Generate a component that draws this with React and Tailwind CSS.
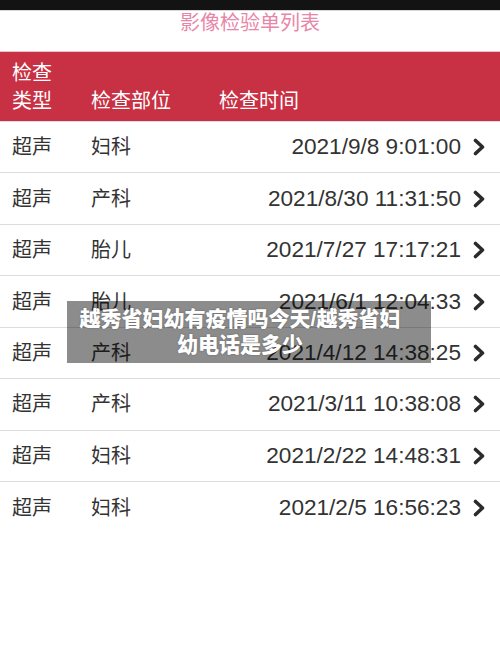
import React from 'react';

const rows = [
  { type: '超声', part: '妇科', time: '2021/9/8 9:01:00' },
  { type: '超声', part: '产科', time: '2021/8/30 11:31:50' },
  { type: '超声', part: '胎儿', time: '2021/7/27 17:17:21' },
  { type: '超声', part: '胎儿', time: '2021/6/1 12:04:33' },
  { type: '超声', part: '产科', time: '2021/4/12 14:38:25' },
  { type: '超声', part: '产科', time: '2021/3/11 10:38:08' },
  { type: '超声', part: '妇科', time: '2021/2/22 14:48:31' },
  { type: '超声', part: '妇科', time: '2021/2/5 16:56:23' },
];

const Chevron = () => (
  <svg width="14" height="18" viewBox="0 0 14 18" className="shrink-0">
    <polyline
      points="3.5,2.5 10.5,9 3.5,15.5"
      fill="none"
      stroke="#2b2b2b"
      strokeWidth="3.6"
      strokeLinecap="round"
      strokeLinejoin="round"
    />
  </svg>
);

const App = () => {
  return (
    <div
      className="relative w-[500px] h-[666px] bg-white overflow-hidden"
      style={{ fontFamily: '"Liberation Sans", "Noto Sans CJK SC", sans-serif' }}
    >
      {/* status bar */}
      <div className="h-[10px] bg-[#131313]" />
      <div className="h-[41px] border-t border-[#d8d8d8] flex justify-center">
        <span className="text-[20px] leading-[24px] text-[#e886a8]">影像检验单列表</span>
      </div>

      {/* table header */}
      <div className="h-[70px] bg-[#c83043] border-t border-[#e9c4cc] flex items-center text-white text-[20px] leading-[28px]">
        <div className="w-[91px] pl-[12px]">
          <div>检查</div>
          <div>类型</div>
        </div>
        <div className="self-end pb-[6px] w-[128px]">检查部位</div>
        <div className="self-end pb-[6px]">检查时间</div>
      </div>

      {/* rows */}
      <div className="border-t border-[#dcdcdc]">
        {rows.map((r, i) => (
          <div
            key={i}
            className={
              'h-[51.45px] flex items-center text-[#333333] ' +
              (i < rows.length - 1 ? 'border-b border-[#dcdcdc]' : '')
            }
          >
            <div className="w-[91px] pl-[12px] text-[20px]">{r.type}</div>
            <div className="w-[100px] text-[20px]">{r.part}</div>
            <div className="flex-1 text-right text-[22.6px] pr-[11px]">{r.time}</div>
            <div className="pr-[14px] flex items-center">
              <Chevron />
            </div>
          </div>
        ))}
      </div>

      {/* overlay caption */}
      <div className="absolute left-[67px] top-[301px] w-[364px] h-[62px] bg-black/45 flex items-center pl-[10px] pr-[28px]">
        <p className="text-white font-black text-[21px] leading-[26px] text-center w-full [text-shadow:0_0_2px_rgba(0,0,0,0.3)]">
          越秀省妇幼有疫情吗今天/越秀省妇幼电话是多少
        </p>
      </div>
    </div>
  );
};

export default App;
